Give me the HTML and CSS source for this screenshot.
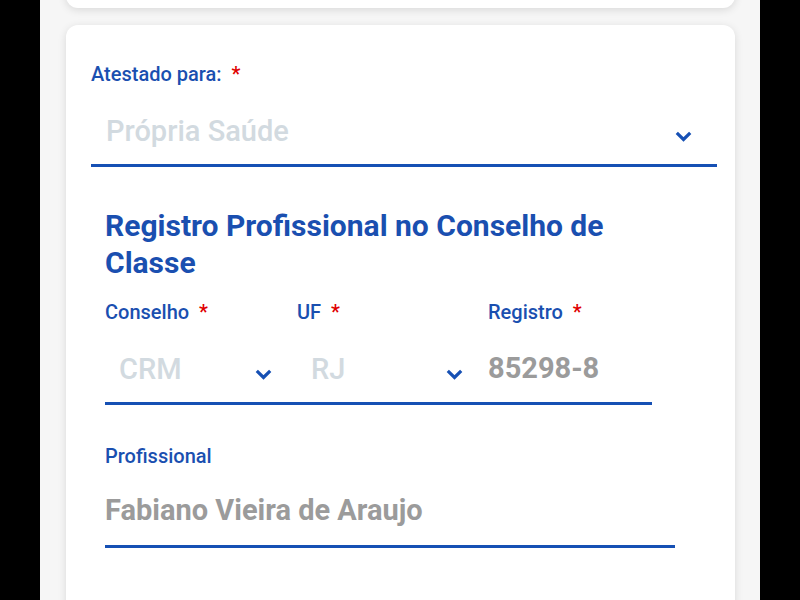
FILE: index.html
```
<!DOCTYPE html>
<html lang="pt-BR">
<head>
<meta charset="utf-8">
<title>Atestado</title>
<link rel="stylesheet" href="styles.css">
</head>
<body>
<div class="screen">
  <div class="card card-top"></div>
  <div class="card card-form">
    <div class="field">
      <div class="label">Atestado para: <span class="req">*</span></div>
      <div class="control select main-select">
        <span class="placeholder">Própria Saúde</span>
        <svg class="chev" width="17" height="11" viewBox="0 0 17 11"><polyline points="1.8,1.8 8.5,8.5 15.2,1.8" fill="none" stroke="#1650b4" stroke-width="3.2"/></svg>
      </div>
    </div>
    <div class="section">
      <h2 class="section-title">Registro Profissional no Conselho de Classe</h2>
      <div class="row">
        <div class="field">
          <div class="label">Conselho <span class="req">*</span></div>
          <div class="control select">
            <span class="placeholder">CRM</span>
            <svg class="chev" width="17" height="11" viewBox="0 0 17 11"><polyline points="1.8,1.8 8.5,8.5 15.2,1.8" fill="none" stroke="#1650b4" stroke-width="3.2"/></svg>
          </div>
        </div>
        <div class="field">
          <div class="label">UF <span class="req">*</span></div>
          <div class="control select">
            <span class="placeholder">RJ</span>
            <svg class="chev" width="17" height="11" viewBox="0 0 17 11"><polyline points="1.8,1.8 8.5,8.5 15.2,1.8" fill="none" stroke="#1650b4" stroke-width="3.2"/></svg>
          </div>
        </div>
        <div class="field">
          <div class="label">Registro <span class="req">*</span></div>
          <div class="control input reg-input">
            <span class="value">85298-8</span>
          </div>
        </div>
      </div>
      <div class="field prof-field">
        <div class="label">Profissional</div>
        <div class="control input prof-input">
          <span class="value">Fabiano Vieira de Araujo</span>
        </div>
      </div>
    </div>
  </div>
</div>
</body>
</html>
```
FILE: styles.css
```
* { box-sizing: border-box; }
html, body { margin: 0; padding: 0; }
body {
  background: #000;
  font-family: Roboto, "Liberation Sans", Arial, sans-serif;
  height: 600px;
  overflow: hidden;
}
.screen {
  width: 720px;
  height: 600px;
  margin: 0 auto;
  background: #f6f6f6;
  padding: 0 25px 0 26px;
  overflow: hidden;
}
.card {
  background: #fff;
  border-radius: 12px;
  box-shadow: 0 2px 8px rgba(0, 0, 0, 0.12);
}
.card-top {
  height: 60px;
  margin-top: -52px;
}
.card-form {
  margin-top: 17px;
  padding: 37px 18px 60px 25px;
  min-height: 700px;
}
.label {
  font-size: 20px;
  line-height: 24px;
  color: #1a4fb0;
  font-weight: 500;
  white-space: nowrap;
}
.req {
  color: #e00000;
  margin-left: 5px;
}
.control {
  display: flex;
  align-items: flex-start;
  justify-content: space-between;
  border-bottom: 3px solid #1650b4;
  font-size: 29px;
  line-height: 36px;
}
.select {
  padding: 27px 25px 15px 14px;
}
.main-select {
  padding-left: 15px;
}
.placeholder {
  color: #d2dae0;
  font-weight: 500;
}
.value {
  color: #9b9b9b;
  font-weight: 700;
}
.chev {
  align-self: flex-end;
  margin-bottom: 7px;
  flex: none;
}
.section {
  padding-left: 14px;
}
.section-title {
  margin: 40px 0 19px;
  max-width: 570px;
  font-size: 30px;
  line-height: 37px;
  font-weight: 700;
  color: #1a4fb0;
}
.row {
  display: grid;
  grid-template-columns: 192px 191px 164px;
}
.input {
  padding: 26px 0 16px 0;
}
.prof-field {
  margin-top: 39px;
  width: 570px;
}
.prof-input {
  padding: 24px 0 17px 0;
}
```
